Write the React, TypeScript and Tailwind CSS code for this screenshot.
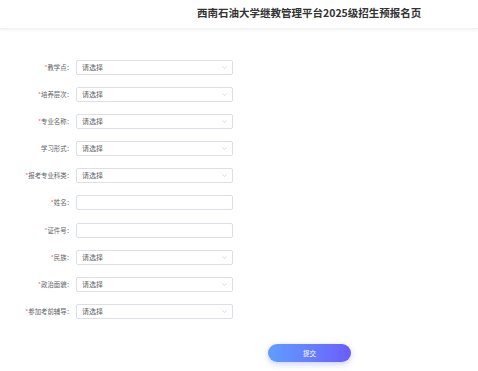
const fields = [
  { label: '教学点', required: true, select: true },
  { label: '培养层次', required: true, select: true },
  { label: '专业名称', required: true, select: true },
  { label: '学习形式', required: false, select: true },
  { label: '报考专业科类', required: true, select: true },
  { label: '姓名', required: true, select: false },
  { label: '证件号', required: true, select: false },
  { label: '民族', required: true, select: true },
  { label: '政治面貌', required: true, select: true },
  { label: '参加考前辅导', required: true, select: true },
];

export default function App() {
  return (
    <div
      className="w-[478px] h-[371px] bg-white overflow-hidden"
      style={{ fontFamily: '"Noto Sans CJK SC", "Noto Sans", sans-serif' }}
    >
      {/* HEADER ------------------------------------------------------*/}
      <div className="h-[29px] pl-[197px] pt-[6px] shadow-[0_1px_3px_rgba(0,0,0,0.06)] border-b border-[#f2f2f2]">
        <h1 className="text-[10.5px] leading-[14px] font-bold text-[#333]">
          西南石油大学继教管理平台2025级招生预报名页
        </h1>
      </div>

      {/* FORM ------------------------------------------------------*/}
      <div className="pt-[31px] flex flex-col gap-[12.1px]">
        {fields.map(f => (
          <div className="flex items-center h-[15px]" key={f.label}>
            <label className="w-[76px] pr-[3px] text-right text-[6.4px] leading-[15px] text-[#606266] whitespace-nowrap">
              {f.required && <span className="text-[#f56c6c]">*</span>}
              {f.label}：
            </label>
            <div className="w-[157px] h-[15px] border border-[#dcdfe6] rounded-[2px] flex items-center justify-between pl-[5px] pr-[5px]">
              {f.select && (
                <>
                  <span className="text-[7px] leading-[13px] text-[#606266]">请选择</span>
                  <svg width="5" height="3" viewBox="0 0 10 6" fill="none">
                    <path d="M1 1l4 4 4-4" stroke="#c0c4cc" strokeWidth="1.2" />
                  </svg>
                </>
              )}
            </div>
          </div>
        ))}
      </div>

      {/* SUBMIT ------------------------------------------------------*/}
      <div className="flex pl-[268px] pt-[25px]">
        <button className="w-[83px] h-[18px] rounded-full bg-gradient-to-r from-[#5f9dff] to-[#6a5cff] text-white text-[6.5px] leading-[18px] shadow-[0_2px_6px_rgba(100,120,255,0.35)]">
          提交
        </button>
      </div>
    </div>
  );
}
